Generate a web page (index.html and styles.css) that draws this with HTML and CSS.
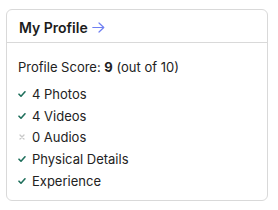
FILE: index.html
```html
<!DOCTYPE html>
<html>
<head>
<meta charset="utf-8">
<link rel="stylesheet" href="styles.css">
</head>
<body>
<div class="card">
  <div class="card-header">
    <span class="title">My Profile</span>
    <svg class="arrow" width="13" height="11" viewBox="0 0 13 11"><path d="M0.8 5.5H11.8M7 1L11.8 5.5L7 10" fill="none" stroke="#6f7ff2" stroke-width="1.2" stroke-linecap="round" stroke-linejoin="round"/></svg>
  </div>
  <div class="card-body">
    <p class="score">Profile Score: <b>9</b> (out of 10)</p>
    <ul class="list">
      <li><svg class="ic" width="8" height="8" viewBox="0 0 8 8"><path d="M1 4.2L3 6.2L7 1.8" fill="none" stroke="#1f6f5c" stroke-width="1.6" stroke-linecap="round" stroke-linejoin="round"/></svg>4 Photos</li>
      <li><svg class="ic" width="8" height="8" viewBox="0 0 8 8"><path d="M1 4.2L3 6.2L7 1.8" fill="none" stroke="#1f6f5c" stroke-width="1.6" stroke-linecap="round" stroke-linejoin="round"/></svg>4 Videos</li>
      <li><svg class="ic" width="8" height="8" viewBox="0 0 8 8"><path d="M2 2L6 6M6 2L2 6" fill="none" stroke="#c8c8c8" stroke-width="1.3" stroke-linecap="round"/></svg>0 Audios</li>
      <li><svg class="ic" width="8" height="8" viewBox="0 0 8 8"><path d="M1 4.2L3 6.2L7 1.8" fill="none" stroke="#1f6f5c" stroke-width="1.6" stroke-linecap="round" stroke-linejoin="round"/></svg>Physical Details</li>
      <li><svg class="ic" width="8" height="8" viewBox="0 0 8 8"><path d="M1 4.2L3 6.2L7 1.8" fill="none" stroke="#1f6f5c" stroke-width="1.6" stroke-linecap="round" stroke-linejoin="round"/></svg>Experience</li>
    </ul>
  </div>
</div>
</body>
</html>
```
FILE: styles.css
```css
html, body { margin: 0; padding: 0; background: #fff; }
body { padding: 9px 0 0 6px; font-family: Inter, "Noto Sans", sans-serif; color: #222; }
.card {
  width: 262px;
  height: 192px;
  box-sizing: border-box;
  border: 1px solid #d9d9d9;
  border-radius: 6px;
}
.card-header {
  height: 33px;
  box-sizing: border-box;
  border-bottom: 1px solid #d9d9d9;
  display: flex;
  align-items: center;
  gap: 4px;
  padding: 2px 11px 0 12px;
}
.title { font-size: 14px; font-weight: 600; color: #1c1c1c; }
.arrow { display: block; margin-top: 1px; }
.card-body { padding: 15px 11px 0; }
.score { margin: 0; font-size: 13px; line-height: 18px; }
.score b { font-weight: 700; }
.list { list-style: none; margin: 7px 0 0; padding: 0; }
.list li {
  display: flex;
  align-items: center;
  gap: 6px;
  font-size: 13px;
  height: 21.7px;
}
.ic { display: block; flex: none; }
```
